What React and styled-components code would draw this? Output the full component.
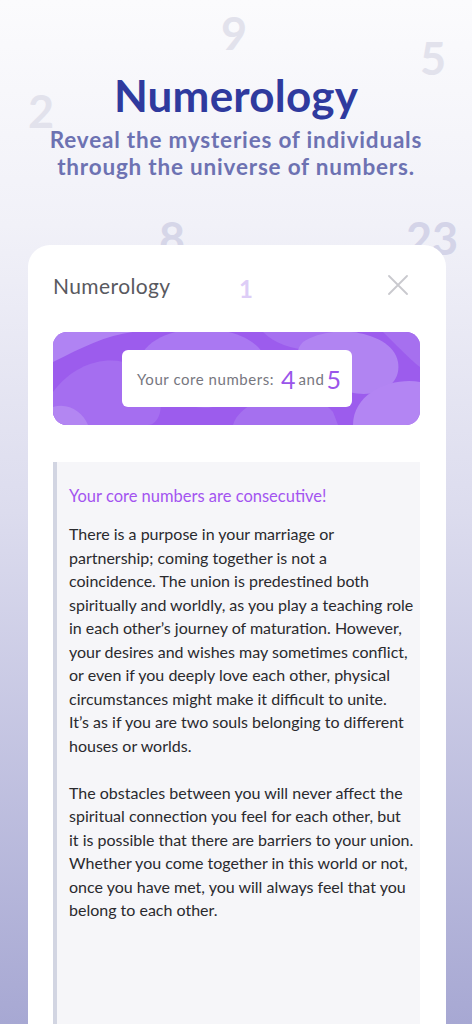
import styled, { createGlobalStyle } from 'styled-components';

const GlobalStyle = createGlobalStyle`
  html, body {
    margin: 0;
    padding: 0;
  }
  body {
    font-family: Lato, "Noto Sans", sans-serif;
    background: #a8a9d4;
  }
`;

const Page = styled.div`
  position: relative;
  min-height: 1024px;
  overflow: hidden;
  background: linear-gradient(180deg, #fbfbfd 0%, #f1f1f8 22%, #dcdcee 50%, #a7a8d3 100%);
  display: flex;
  flex-direction: column;
  align-items: center;
`;

const FloatNumber = styled.span`
  position: absolute;
  left: ${(p) => p.x}px;
  top: ${(p) => p.y}px;
  font-family: Lato, sans-serif;
  font-weight: 700;
  font-size: ${(p) => p.size || 45}px;
  line-height: 1;
  color: ${(p) => p.color || '#e2e2ec'};
  z-index: ${(p) => (p.front ? 3 : 0)};
  pointer-events: none;
`;

const Hero = styled.header`
  position: relative;
  z-index: 1;
  display: flex;
  flex-direction: column;
  align-items: center;
  padding-top: 68px;
  text-align: center;
`;

const Title = styled.h1`
  margin: 0;
  font-family: Lato, sans-serif;
  font-weight: 700;
  font-size: 44px;
  line-height: 54px;
  color: #2f3a9e;
  letter-spacing: 0.2px;
`;

const Subtitle = styled.p`
  margin: 4px 0 0;
  font-family: Lato, sans-serif;
  font-weight: 700;
  font-size: 22.5px;
  line-height: 27px;
  letter-spacing: 0.8px;
  color: #6d72b2;
`;

const Card = styled.section`
  position: relative;
  z-index: 2;
  align-self: stretch;
  margin: 65px 26px 0 28px;
  background: #ffffff;
  border-radius: 22px 22px 0 0;
  padding: 26px 26px 0 25px;
  flex: 1;
  display: flex;
  flex-direction: column;
`;

const CardHeader = styled.div`
  display: flex;
  align-items: center;
  justify-content: space-between;
  height: 28px;
`;

const CardTitle = styled.h2`
  margin: 0;
  font-family: Lato, sans-serif;
  font-weight: 400;
  font-size: 21px;
  letter-spacing: 0.4px;
  color: #595960;
`;

const CloseButton = styled.button`
  border: none;
  background: none;
  padding: 0;
  margin-right: 12px;
  width: 20px;
  height: 20px;
  display: flex;
  align-items: center;
  justify-content: center;
  cursor: pointer;
`;

const Banner = styled.div`
  position: relative;
  margin-top: 33px;
  height: 93px;
  border-radius: 14px;
  background: #9c5ced;
  overflow: hidden;
  display: flex;
  align-items: center;
  justify-content: center;
`;

const BannerBlobs = styled.svg`
  position: absolute;
  inset: 0;
  width: 100%;
  height: 100%;
`;

const NumbersBox = styled.div`
  position: relative;
  z-index: 1;
  margin-left: 1px;
  width: 230px;
  height: 57px;
  background: #ffffff;
  border-radius: 6px;
  display: flex;
  align-items: center;
  justify-content: center;
  padding-left: 4px;
  box-sizing: border-box;
  font-size: 15px;
  letter-spacing: 0.55px;
  color: #77777f;
`;

const CoreDigit = styled.span`
  font-size: 25px;
  font-weight: 400;
  letter-spacing: 0;
  color: #9a55ea;
  margin: 0 ${(p) => p.gap || 0}px 0 ${(p) => p.lead || 0}px;
`;

const Reading = styled.article`
  margin-top: 37px;
  flex: 1;
  background: #f6f6f9;
  border-left: 4px solid #d2d5e2;
  padding: 22px 6px 40px 12px;
`;

const ReadingTitle = styled.h3`
  margin: 0 0 14px;
  font-family: Lato, sans-serif;
  font-weight: 400;
  font-size: 16.5px;
  line-height: 24px;
  color: #a354f0;
`;

const ReadingText = styled.p`
  margin: 0 0 23.5px;
  font-family: Lato, sans-serif;
  font-size: 16px;
  line-height: 23.5px;
  color: #2a2a2e;
`;

export default function App() {
  return (
    <>
      <GlobalStyle />
      <Page>
        <FloatNumber x={221} y={11}>9</FloatNumber>
        <FloatNumber x={420} y={36}>5</FloatNumber>
        <FloatNumber x={28} y={89}>2</FloatNumber>
        <FloatNumber x={159} y={216} color="#d6d6e8">8</FloatNumber>
        <FloatNumber x={406} y={216} color="#d4d4e8">23</FloatNumber>
        <FloatNumber x={239} y={277} size={24} color="#ddcdf7" front>
          1
        </FloatNumber>

        <Hero>
          <Title>Numerology</Title>
          <Subtitle>
            Reveal the mysteries of individuals
            <br />
            through the universe of numbers.
          </Subtitle>
        </Hero>

        <Card>
          <CardHeader>
            <CardTitle>Numerology</CardTitle>
            <CloseButton aria-label="Close">
              <svg width="20" height="20" viewBox="0 0 20 20">
                <path d="M1 1 L19 19 M19 1 L1 19" stroke="#c9c9ce" strokeWidth="1.8" strokeLinecap="round" />
              </svg>
            </CloseButton>
          </CardHeader>

          <Banner>
            <BannerBlobs viewBox="0 0 367 93" preserveAspectRatio="none">
              <path d="M0 30 C40 10 70 -5 110 0 L0 0 Z" fill="#b083f3" />
              <path d="M0 60 C30 20 80 20 100 50 C115 75 105 93 95 93 L0 93 Z" fill="#a56ef0" />
              <path d="M0 75 C15 70 30 80 35 93 L0 93 Z" fill="#b386f2" />
              <path d="M90 20 C110 -10 180 -10 205 15 C230 40 200 70 160 75 C120 80 80 50 90 20 Z" fill="#aa78f2" />
              <path d="M180 93 C190 60 260 55 280 80 L285 93 Z" fill="#a570ef" />
              <path d="M210 0 C230 20 270 25 300 5 L305 0 Z" fill="#a670f0" />
              <path d="M250 10 C280 -10 340 0 345 30 C350 60 310 70 285 55 C255 40 235 25 250 10 Z" fill="#b184f2" />
              <path d="M300 93 C300 60 340 45 367 50 L367 93 Z" fill="#b385f3" />
              <path d="M330 0 C345 15 360 30 367 35 L367 0 Z" fill="#a670ef" />
            </BannerBlobs>
            <NumbersBox>
              Your core numbers:
              <CoreDigit lead={7} gap={3}>4</CoreDigit>
              and
              <CoreDigit lead={2}>5</CoreDigit>
            </NumbersBox>
          </Banner>

          <Reading>
            <ReadingTitle>Your core numbers are consecutive!</ReadingTitle>
            <ReadingText>
              There is a purpose in your marriage or partnership; coming together is not a
              coincidence. The union is predestined both spiritually and worldly, as you play a
              teaching role in each other’s journey of maturation. However, your desires and
              wishes may sometimes conflict, or even if you deeply love each other, physical
              circumstances might make it difficult to unite.
              <br />
              It’s as if you are two souls belonging to different houses or worlds.
            </ReadingText>
            <ReadingText>
              The obstacles between you will never affect the spiritual connection you feel for
              each other, but it is possible that there are barriers to your union. Whether you
              come together in this world or not, once you have met, you will always feel that
              you belong to each other.
            </ReadingText>
          </Reading>
        </Card>
      </Page>
    </>
  );
}
